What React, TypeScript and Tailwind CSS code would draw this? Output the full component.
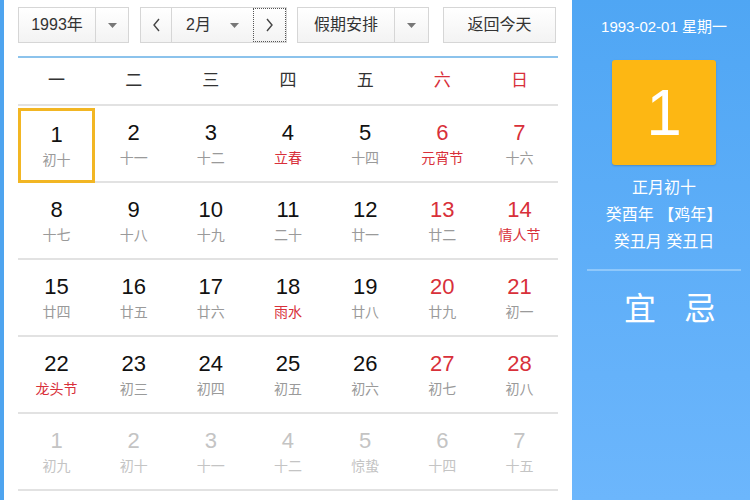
const weekdays = ['一', '二', '三', '四', '五', '六', '日'];

type Day = { d: number; lunar: string; red?: boolean; festival?: boolean; muted?: boolean };

const days: Day[] = [
  { d: 1, lunar: '初十' },
  { d: 2, lunar: '十一' },
  { d: 3, lunar: '十二' },
  { d: 4, lunar: '立春', festival: true },
  { d: 5, lunar: '十四' },
  { d: 6, lunar: '元宵节', red: true, festival: true },
  { d: 7, lunar: '十六', red: true },
  { d: 8, lunar: '十七' },
  { d: 9, lunar: '十八' },
  { d: 10, lunar: '十九' },
  { d: 11, lunar: '二十' },
  { d: 12, lunar: '廿一' },
  { d: 13, lunar: '廿二', red: true },
  { d: 14, lunar: '情人节', red: true, festival: true },
  { d: 15, lunar: '廿四' },
  { d: 16, lunar: '廿五' },
  { d: 17, lunar: '廿六' },
  { d: 18, lunar: '雨水', festival: true },
  { d: 19, lunar: '廿八' },
  { d: 20, lunar: '廿九', red: true },
  { d: 21, lunar: '初一', red: true },
  { d: 22, lunar: '龙头节', festival: true },
  { d: 23, lunar: '初三' },
  { d: 24, lunar: '初四' },
  { d: 25, lunar: '初五' },
  { d: 26, lunar: '初六' },
  { d: 27, lunar: '初七', red: true },
  { d: 28, lunar: '初八', red: true },
  { d: 1, lunar: '初九', muted: true },
  { d: 2, lunar: '初十', muted: true },
  { d: 3, lunar: '十一', muted: true },
  { d: 4, lunar: '十二', muted: true },
  { d: 5, lunar: '惊蛰', muted: true },
  { d: 6, lunar: '十四', muted: true },
  { d: 7, lunar: '十五', muted: true },
];

const font = { fontFamily: '"Liberation Sans", "Noto Sans CJK SC", sans-serif' };

function Caret() {
  return (
    <svg width="9" height="5" viewBox="0 0 9 5">
      <path d="M0 0h9L4.5 5z" fill="#777" />
    </svg>
  );
}

function Chevron({ dir }: { dir: 'left' | 'right' }) {
  return (
    <svg width="9" height="14" viewBox="0 0 9 14" fill="none" stroke="#444" strokeWidth="1.4">
      {dir === 'left' ? <path d="M7 1L2 7l5 6" /> : <path d="M2 1l5 6-5 6" />}
    </svg>
  );
}

function DayCell({ day, selected }: { day: Day; selected?: boolean }) {
  const numColor = day.muted ? 'text-[#c4c4c4]' : day.red ? 'text-[#d8303a]' : 'text-[#111]';
  const lunarColor = day.muted
    ? 'text-[#c4c4c4]'
    : day.festival
      ? 'text-[#d8303a]'
      : 'text-[#9a9a9a]';
  return (
    <div
      className={`flex h-[75px] flex-col items-center justify-center ${
        selected ? 'mt-[2px] border-[3px] border-[#f2b623]' : ''
      }`}
    >
      <div className={`text-[22px] leading-[26px] ${numColor}`}>{day.d}</div>
      <div className={`mt-[3px] text-[14px] leading-[18px] ${lunarColor}`}>{day.lunar}</div>
    </div>
  );
}

export default function App() {
  const rows = [0, 1, 2, 3, 4].map((r) => days.slice(r * 7, r * 7 + 7));
  return (
    <div className="flex h-[500px] w-[750px] overflow-hidden bg-white" style={font}>
      <div className="w-[4px] bg-[#4ea4ef]" />

      {/* Calendar */}
      <div className="w-[568px] px-[14px] pt-[7px]">
        <div className="flex h-[36px] items-stretch text-[16px] text-[#333]">
          <div className="flex w-[111px] border border-[#d6d6d6] bg-gradient-to-b from-white to-[#f3f3f3]">
            <div className="flex flex-1 items-center justify-center">1993年</div>
            <div className="flex w-[33px] items-center justify-center border-l border-[#d6d6d6]">
              <Caret />
            </div>
          </div>
          <div className="ml-[11px] flex w-[147px] border border-[#d6d6d6] bg-gradient-to-b from-white to-[#f3f3f3]">
            <div className="flex w-[31px] items-center justify-center border-r border-[#d6d6d6]">
              <Chevron dir="left" />
            </div>
            <div className="flex flex-1 items-center justify-between pl-[14px] pr-[14px]">
              <span>2月</span>
              <Caret />
            </div>
            <div className="flex w-[33px] items-center justify-center border border-dotted border-[#555]">
              <Chevron dir="right" />
            </div>
          </div>
          <div className="ml-[10px] flex w-[132px] border border-[#d6d6d6] bg-gradient-to-b from-white to-[#f3f3f3]">
            <div className="flex flex-1 items-center justify-center">假期安排</div>
            <div className="flex w-[34px] items-center justify-center border-l border-[#d6d6d6]">
              <Caret />
            </div>
          </div>
          <div className="ml-[14px] flex w-[113px] items-center justify-center border border-[#d6d6d6] bg-gradient-to-b from-white to-[#f3f3f3]">
            返回今天
          </div>
        </div>

        <div className="mt-[13px] h-[2px] bg-[#8cc3ec]" />

        <div className="grid h-[48px] grid-cols-7 items-center border-b-2 border-[#e2e2e2] text-[17px]">
          {weekdays.map((w, i) => (
            <div key={w} className={`text-center ${i >= 5 ? 'text-[#d8303a]' : 'text-[#333]'}`}>
              {w}
            </div>
          ))}
        </div>

        {rows.map((row, r) => (
          <div key={r} className="grid h-[77px] grid-cols-7 border-b-2 border-[#e2e2e2]">
            {row.map((day, i) => (
              <DayCell key={i} day={day} selected={r === 0 && i === 0} />
            ))}
          </div>
        ))}
      </div>

      {/* Side panel */}
      <div className="flex flex-1 flex-col items-center bg-gradient-to-b from-[#4fa6f4] to-[#6cb6fc] pl-[6px] text-white">
        <div className="mt-[17px] text-[15px] leading-[20px]">1993-02-01 星期一</div>
        <div className="mt-[23px] flex h-[105px] w-[104px] items-center justify-center rounded-[3px] bg-[#fdb713] text-[64px] font-light shadow-[0_1px_2px_rgba(0,0,0,0.2)]">
          1
        </div>
        <div className="mt-[9px] text-[16px] leading-[27px]">正月初十</div>
        <div className="text-[16px] leading-[27px]">癸酉年 【鸡年】</div>
        <div className="text-[16px] leading-[27px]">癸丑月 癸丑日</div>
        <div className="mt-[14px] h-[2px] w-[154px] bg-[#8fc8fb]" />
        <div className="mt-[18px] flex w-full justify-center gap-[28px] pl-[12px] text-[32px] leading-[40px]">
          <span>宜</span>
          <span>忌</span>
        </div>
      </div>
    </div>
  );
}
